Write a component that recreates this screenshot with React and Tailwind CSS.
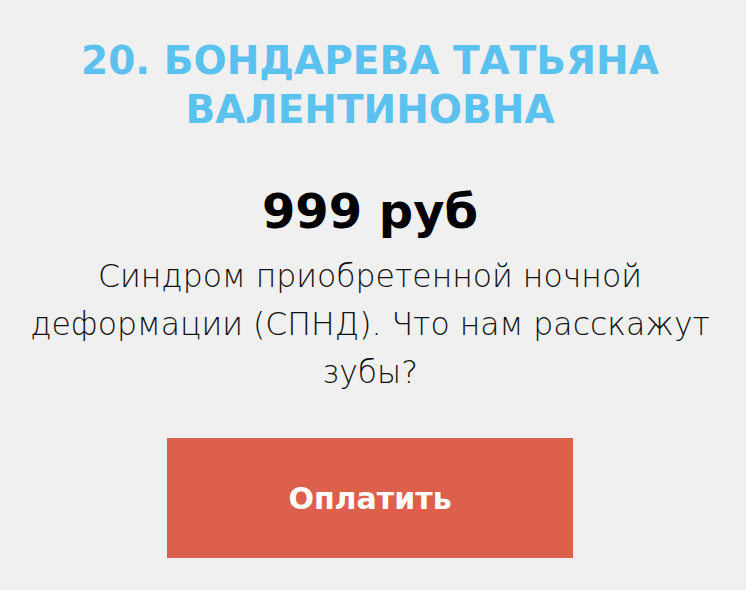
import React from 'react';

export default function App() {
  return (
    <div className="min-h-[590px] w-full bg-[#f0f0f0] font-['DejaVu_Sans',sans-serif]">
      <div className="mx-auto flex w-[746px] flex-col items-center pl-[14px] pr-[20px] pt-[36px] text-center">
        {/* Speaker name */}
        <h2 className="text-[39px] font-bold uppercase leading-[49px] text-[#5bc1ef]">
          20. Бондарева Татьяна
          <br />
          Валентиновна
        </h2>

        {/* Price */}
        <div className="mt-[49px] text-[48px] font-bold leading-[56px] text-black">999 руб</div>

        {/* Lecture title */}
        <p className="mt-[13px] text-[31.5px] font-light leading-[48px] text-[#111]">
          Синдром приобретенной ночной
          <br />
          деформации (СПНД). Что нам расскажут
          <br />
          зубы?
        </p>

        <button className="mt-[42px] h-[120px] w-[406px] bg-[#dc604b] text-[30px] font-bold text-white">
          Оплатить
        </button>
      </div>
    </div>
  );
}
